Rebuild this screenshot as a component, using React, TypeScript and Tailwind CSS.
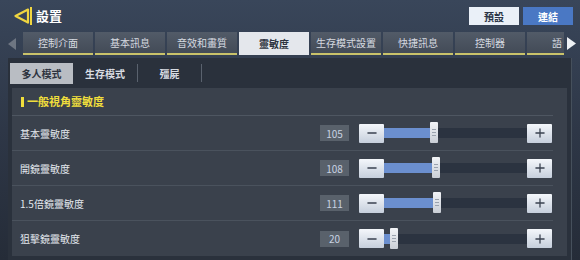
import { Minus, Plus } from "lucide-react";

const tabs = ["控制介面", "基本訊息", "音效和畫質", "靈敏度", "生存模式設置", "快捷訊息", "控制器"];

const rows = [
  { label: "基本靈敏度", value: "105", pos: 46 },
  { label: "開鏡靈敏度", value: "108", pos: 48 },
  { label: "1.5倍鏡靈敏度", value: "111", pos: 49 },
  { label: "狙擊鏡靈敏度", value: "20", pos: 6 },
];

function SliderRow({ label, value, pos, last }: { label: string; value: string; pos: number; last?: boolean }) {
  return (
    <div className={`flex h-[35px] items-center ${last ? "" : "border-b border-[#4a525d]"}`}>
      <span className="w-[308px] pl-[8px] text-[10px] text-[#e4e8ee]">{label}</span>
      <div className="flex h-[16px] w-[29px] items-center justify-center bg-[#59616b] text-[10px] text-[#c8d2e2]">{value}</div>
      <div className="ml-[10px] flex items-center">
        <button className="flex h-[19px] w-[25px] items-center justify-center rounded-[1px] bg-gradient-to-b from-[#f4f7fb] to-[#c6cfdc] text-[#3a4250]">
          <Minus size={14} strokeWidth={2.2} />
        </button>
        <div className="relative h-[10px] w-[143px] bg-[#2b3340]">
          <div className="h-full bg-[#6b8fcf]" style={{ width: `${pos}px` }} />
          <div
            className="absolute top-[-6px] flex h-[21px] w-[8px] flex-col items-center justify-center gap-[2px] rounded-[1px] bg-gradient-to-b from-[#f2f4f7] to-[#c9ced6]"
            style={{ left: `${pos}px` }}
          >
            <span className="h-px w-[4px] bg-[#9aa2ae]" />
            <span className="h-px w-[4px] bg-[#9aa2ae]" />
            <span className="h-px w-[4px] bg-[#9aa2ae]" />
          </div>
        </div>
        <button className="flex h-[19px] w-[25px] items-center justify-center rounded-[1px] bg-gradient-to-b from-[#f4f7fb] to-[#c6cfdc] text-[#3a4250]">
          <Plus size={14} strokeWidth={2.2} />
        </button>
      </div>
    </div>
  );
}

export default function App() {
  return (
    <div
      className="relative h-[260px] w-[580px] overflow-hidden bg-gradient-to-b from-[#39465a] via-[#2e3747] to-[#252c38]"
      style={{ fontFamily: '"Noto Sans CJK TC", "Noto Sans", sans-serif' }}
    >
      {/* top bar */}
      <div className="flex h-[32px] items-center justify-between pl-[13px] pr-[7px]">
        <div className="flex items-center">
          <svg width="20" height="18" viewBox="0 0 20 18">
            <path d="M15 2.5 L2.5 9 L15 15.5 Z" fill="none" stroke="#f0d640" strokeWidth="2.2" strokeLinejoin="round" />
            <rect x="17" y="0" width="2" height="18" fill="#f0d640" />
          </svg>
          <span className="ml-[3px] text-[13px] font-bold text-white">設置</span>
        </div>
        <div className="flex gap-[4px]">
          <button className="h-[18px] w-[50px] bg-[#eaf0f8] text-[10px] font-bold text-[#2a3446]">預設</button>
          <button className="h-[18px] w-[50px] bg-[#4a78c4] text-[10px] font-bold text-white">連結</button>
        </div>
      </div>

      {/* tab row */}
      <div className="flex h-[23px] items-stretch">
        <div className="flex w-[23px] items-center justify-center">
          <svg width="8" height="12" viewBox="0 0 8 12">
            <path d="M8 0 L0 6 L8 12 Z" fill="#6e7682" />
          </svg>
        </div>
        {tabs.map((t) => {
          const active = t === "靈敏度";
          return (
            <div
              key={t}
              className={`mr-[2px] flex w-[70px] items-center justify-center text-[10px] ${
                active
                  ? "bg-[#e4e7ec] font-bold text-[#2e3440]"
                  : "border-b-2 border-[#c9c26a] bg-gradient-to-b from-[#525b68] to-[#434b57] text-[#d6dae0]"
              }`}
            >
              {t}
            </div>
          );
        })}
        <div className="flex w-[37px] items-center justify-end border-b-2 border-[#c9c26a] bg-gradient-to-b from-[#525b68] to-[#434b57] pr-[2px] text-[10px] text-[#d6dae0]">
          語
        </div>
        <div className="flex w-[15px] items-center justify-center">
          <svg width="9" height="13" viewBox="0 0 9 13">
            <path d="M0 0 L9 6.5 L0 13 Z" fill="#eef1f5" />
          </svg>
        </div>
      </div>

      {/* main panel */}
      <div className="mx-[8px] mt-[3px] h-[210px] border-r border-[#46505c] bg-[#2a313c] pt-[3px]">
        <div className="flex h-[24px] items-center pl-[2px]">
          <div className="flex h-[21px] w-[63px] items-center justify-center bg-[#b9bdc3] text-[10px] font-bold text-[#2e3440]">多人模式</div>
          <div className="flex h-[18px] w-[65px] items-center justify-center border-r border-[#5a626e] text-[10px] font-bold text-[#d8dce2]">生存模式</div>
          <div className="flex h-[18px] w-[64px] items-center justify-center border-r border-[#5a626e] text-[10px] font-bold text-[#d8dce2]">殭屍</div>
        </div>

        <div className="mx-[4px] mt-[3px] bg-[#3a414c] pr-[14px]">
          <div className="flex h-[28px] items-center border-b border-[#4e5661] pl-[9px]">
            <span className="h-[10px] w-[3px] bg-[#f0de3c]" />
            <span className="ml-[3px] text-[11px] font-bold text-[#f0de3c]">一般視角靈敏度</span>
          </div>
          {rows.map((r, i) => (
            <SliderRow key={r.label} {...r} last={i === rows.length - 1} />
          ))}
        </div>
      </div>
    </div>
  );
}
